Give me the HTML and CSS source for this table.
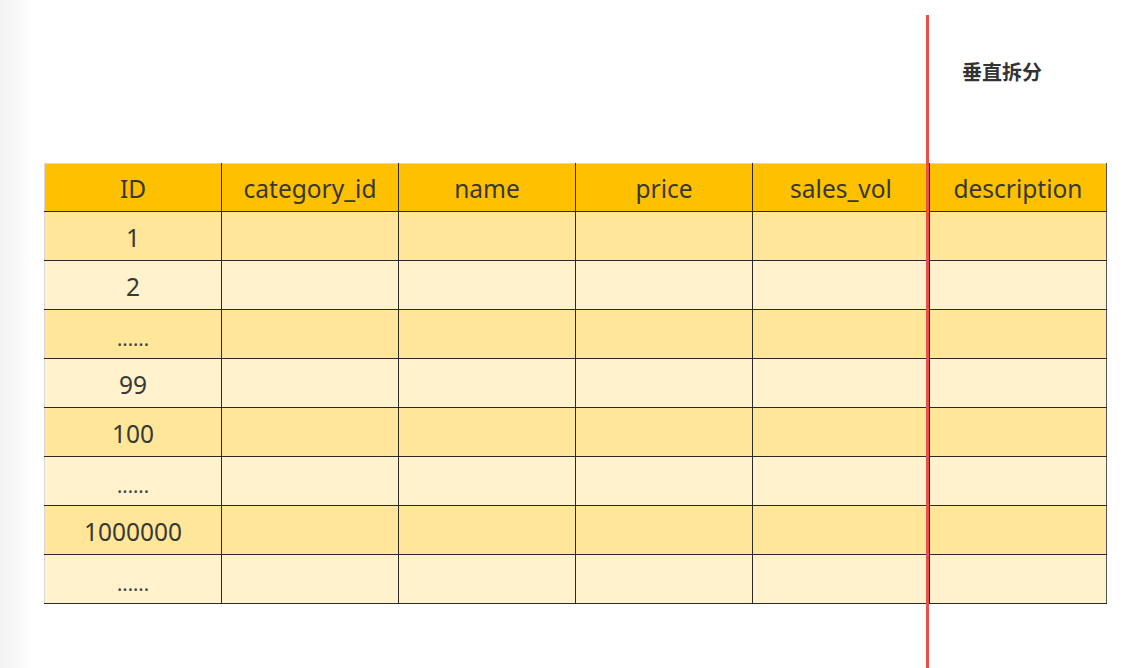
FILE: index.html
```html
<!DOCTYPE html>
<html lang="zh">
<head>
<meta charset="utf-8">
<title>垂直拆分</title>
<link rel="stylesheet" href="styles.css">
</head>
<body>
<div class="page">
  <div class="caption-row">
    <span class="caption">垂直拆分</span>
  </div>
  <table class="grid">
    <thead>
      <tr>
        <th>ID</th><th>category_id</th><th>name</th><th>price</th><th>sales_vol</th><th>description</th>
      </tr>
    </thead>
    <tbody>
      <tr class="odd"><td>1</td><td></td><td></td><td></td><td></td><td></td></tr>
      <tr class="even"><td>2</td><td></td><td></td><td></td><td></td><td></td></tr>
      <tr class="odd"><td class="dots">......</td><td></td><td></td><td></td><td></td><td></td></tr>
      <tr class="even"><td>99</td><td></td><td></td><td></td><td></td><td></td></tr>
      <tr class="odd"><td>100</td><td></td><td></td><td></td><td></td><td></td></tr>
      <tr class="even"><td class="dots">......</td><td></td><td></td><td></td><td></td><td></td></tr>
      <tr class="odd"><td>1000000</td><td></td><td></td><td></td><td></td><td></td></tr>
      <tr class="even"><td class="dots">......</td><td></td><td></td><td></td><td></td><td></td></tr>
    </tbody>
  </table>
  <div class="split-line"></div>
</div>
</body>
</html>
```
FILE: styles.css
```css
html, body {
  margin: 0;
  padding: 0;
  background: #ffffff;
}
body {
  font-family: "Noto Sans", "Noto Sans CJK SC", sans-serif;
  color: #333333;
}
.page {
  position: relative;
  width: 1128px;
  height: 668px;
  overflow: hidden;
  background: linear-gradient(to right, #f2f2f2 0px, #f7f7f7 14px, #ffffff 34px);
  padding-left: 44px;
  box-sizing: border-box;
}
.caption-row {
  height: 163px;
  display: flex;
  justify-content: flex-end;
  padding-right: 86px;
  padding-top: 58px;
  box-sizing: border-box;
}
.caption {
  font-family: "Noto Sans CJK SC", sans-serif;
  font-weight: 700;
  font-size: 20px;
  line-height: 28px;
  color: #333333;
}
.grid {
  border-collapse: collapse;
  table-layout: fixed;
  width: 1062px;
  border-top: 1px solid #d9d9d9;
  border-left: 1px solid #d9d9d9;
}
.grid th, .grid td {
  width: 177px;
  border-right: 1px solid #2a2a2a;
  border-bottom: 1.5px solid #2a2a2a;
  text-align: center;
  font-size: 24.5px;
  font-weight: 400;
  color: #383838;
  padding: 0;
  box-sizing: border-box;
}
.grid th {
  background: #ffc000;
  height: 48px;
  padding-top: 2px;
}
.grid td {
  height: 49px;
  padding-top: 3px;
}
.grid tr > :last-child {
  border-right: 1.5px solid #555555;
}
.odd td { background: #ffe699; }
.even td { background: #fff2cc; }
.grid td.dots {
  font-size: 20px;
  vertical-align: bottom;
  padding-bottom: 6px;
  color: #444;
}
.split-line {
  position: absolute;
  left: 926px;
  top: 15px;
  width: 3px;
  height: 653px;
  background: #e8504e;
}
```
